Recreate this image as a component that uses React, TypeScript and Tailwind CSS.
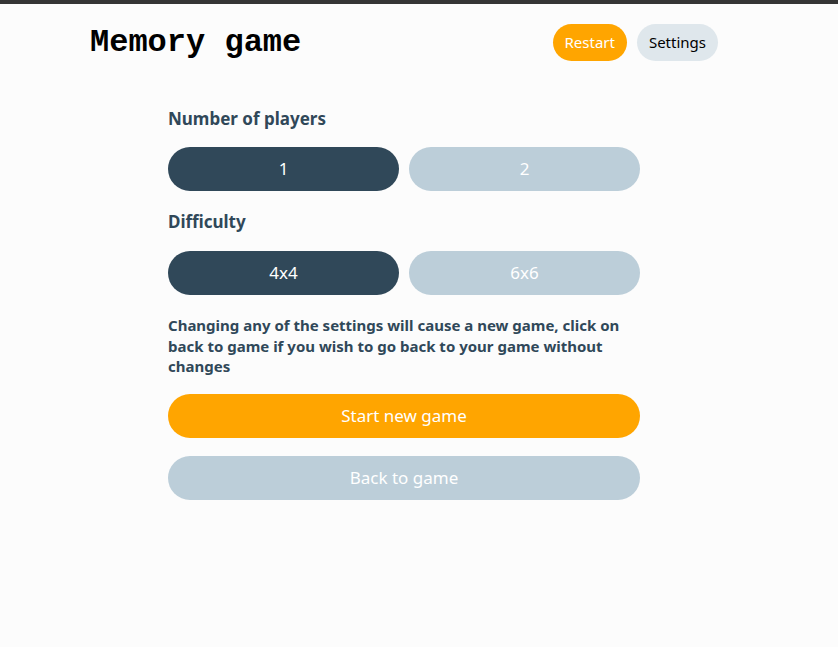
import React from "react";

export default function App() {
  const sans = { fontFamily: '"Noto Sans", "Open Sans", sans-serif' } as React.CSSProperties;
  return (
    <div className="min-h-[647px] bg-[#fcfcfc] border-t-4 border-[#353535]" style={sans}>
      <header className="ml-[90px] w-[628px] flex items-center justify-between pt-[20px]">
        <h1 className="text-[32px] leading-none font-bold text-black" style={{ fontFamily: '"Liberation Mono", monospace' }}>
          Memory game
        </h1>
        <div className="flex gap-[10px]">
          <button className="h-[37px] px-[12px] rounded-full bg-[#ffa500] text-white text-[15px]">Restart</button>
          <button className="h-[37px] px-[12px] rounded-full bg-[#dfe7ec] text-black text-[15px]">Settings</button>
        </div>
      </header>
      <main className="ml-[168px] w-[472px] mt-[46px] text-[#304859]">
        <h2 className="text-[17px] font-bold leading-[24px]">Number of players</h2>
        <div className="grid grid-cols-2 gap-[10px] mt-[16px]">
          <button className="h-[44px] rounded-full bg-[#304859] text-white text-[17px]">1</button>
          <button className="h-[44px] rounded-full bg-[#bcced9] text-white text-[17px]">2</button>
        </div>
        <h2 className="text-[17px] font-bold leading-[24px] mt-[19px]">Difficulty</h2>
        <div className="grid grid-cols-2 gap-[10px] mt-[17px]">
          <button className="h-[44px] rounded-full bg-[#304859] text-white text-[17px]">4x4</button>
          <button className="h-[44px] rounded-full bg-[#bcced9] text-white text-[17px]">6x6</button>
        </div>
        <p className="text-[15px] font-bold leading-[20.5px] mt-[20px]">
          Changing any of the settings will cause a new game, click on back to game if you wish to go back to your game without changes
        </p>
        <button className="w-full h-[44px] rounded-full bg-[#ffa500] text-white text-[17px] mt-[17px] block">Start new game</button>
        <button className="w-full h-[44px] rounded-full bg-[#bcced9] text-white text-[17px] mt-[18px] block">Back to game</button>
      </main>
    </div>
  );
}
